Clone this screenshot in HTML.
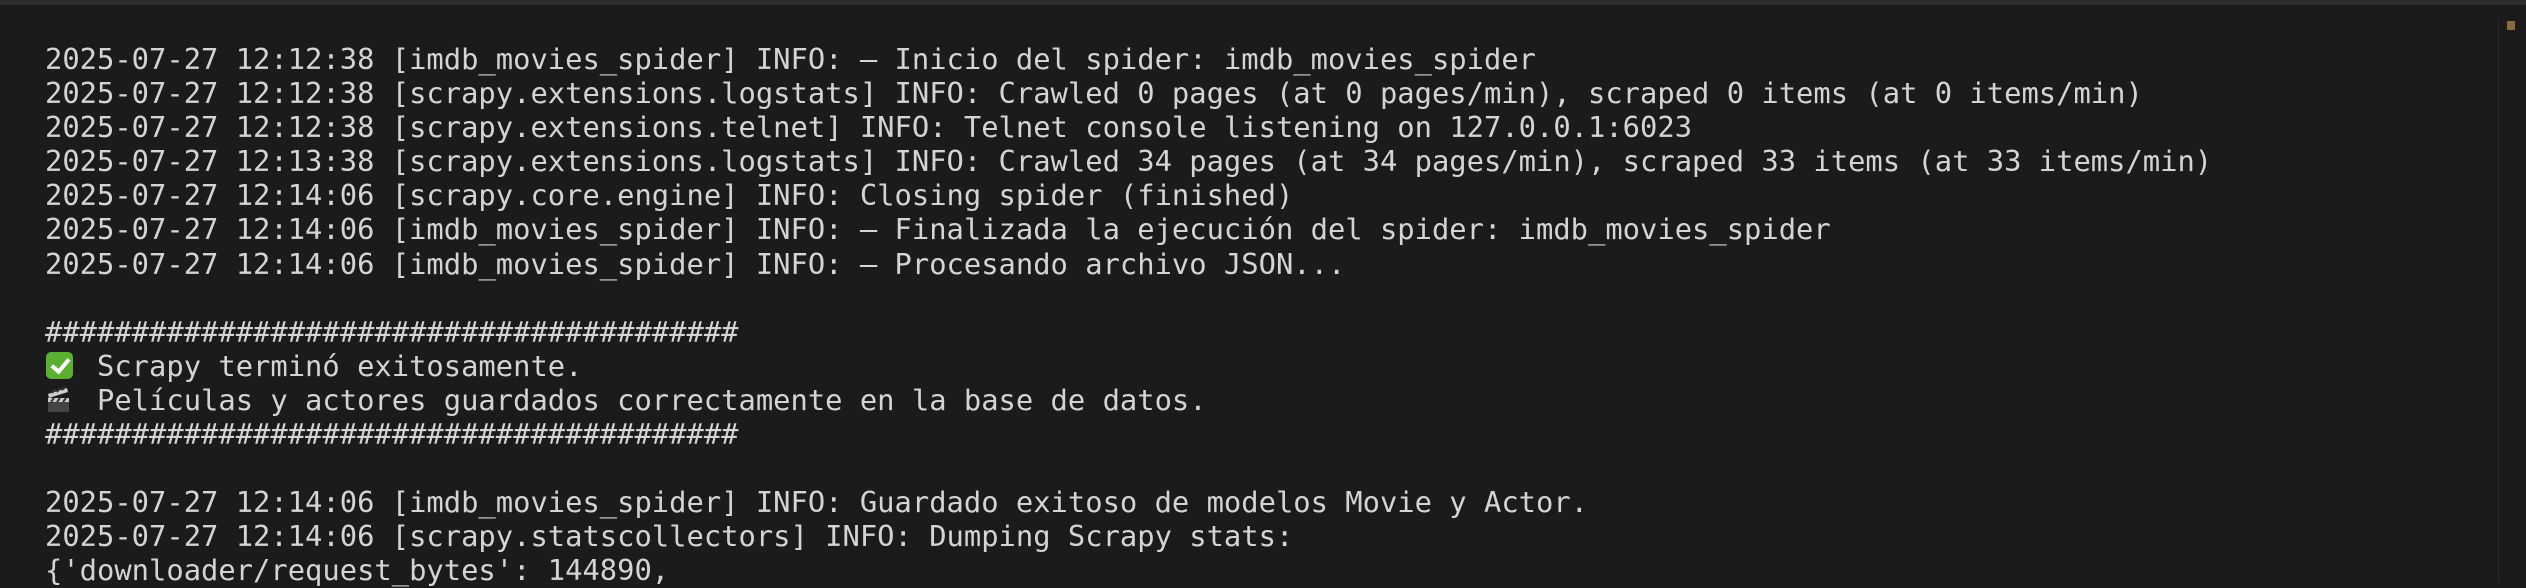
<!DOCTYPE html>
<html><head><meta charset="utf-8"><style>
html,body{margin:0;padding:0;}
body{width:2526px;height:582px;overflow:hidden;background:#1b1b1b;position:relative;}
.top{position:absolute;left:0;top:0;width:2526px;height:5px;background:#2d2d2d;}
.sb{position:absolute;left:2498px;top:20px;width:1px;height:562px;background:#2a2a2a;}
.mk{position:absolute;left:2507px;top:21px;width:8px;height:9px;background:#8a6a3a;}
pre{position:absolute;left:45px;top:42px;margin:0;font-family:"DejaVu Sans Mono","Liberation Mono",monospace;font-size:28.8px;line-height:34.1px;color:#d4d4d4;white-space:pre;}
.e{display:inline-block;width:2ch;height:1em;vertical-align:-4px;position:relative;}
.ck{position:absolute;left:1px;top:1px;width:27px;height:27px;border-radius:5px;background:#5bb032;}
.ck:after{content:"";position:absolute;left:9px;top:3px;width:7px;height:14px;border:solid #fff;border-width:0 4px 4px 0;transform:rotate(40deg);}
</style></head><body>
<div class="top"></div><div class="sb"></div><div class="mk"></div>
<pre>2025-07-27 12:12:38 [imdb_movies_spider] INFO: – Inicio del spider: imdb_movies_spider
2025-07-27 12:12:38 [scrapy.extensions.logstats] INFO: Crawled 0 pages (at 0 pages/min), scraped 0 items (at 0 items/min)
2025-07-27 12:12:38 [scrapy.extensions.telnet] INFO: Telnet console listening on 127.0.0.1:6023
2025-07-27 12:13:38 [scrapy.extensions.logstats] INFO: Crawled 34 pages (at 34 pages/min), scraped 33 items (at 33 items/min)
2025-07-27 12:14:06 [scrapy.core.engine] INFO: Closing spider (finished)
2025-07-27 12:14:06 [imdb_movies_spider] INFO: – Finalizada la ejecución del spider: imdb_movies_spider
2025-07-27 12:14:06 [imdb_movies_spider] INFO: – Procesando archivo JSON...

########################################
<span class="e"><span class="ck"></span></span> Scrapy terminó exitosamente.
<span class="e"><svg width="28" height="30" viewBox="0 0 28 30" style="position:absolute;left:0;top:0"><rect x="3" y="13" width="21" height="14" fill="#444"/><rect x="3" y="13" width="21" height="4" fill="#ccc"/><path d="M3 9 L22 3 L23 7 L4 13 Z" fill="#ccc"/><path d="M7 8 L10 4 M12 7 L15 3 M17 5 L20 2 M6 17 L9 13 M12 17 L15 13 M18 17 L21 13" stroke="#333" stroke-width="2"/></svg></span> Películas y actores guardados correctamente en la base de datos.
########################################

2025-07-27 12:14:06 [imdb_movies_spider] INFO: Guardado exitoso de modelos Movie y Actor.
2025-07-27 12:14:06 [scrapy.statscollectors] INFO: Dumping Scrapy stats:
{'downloader/request_bytes': 144890,</pre>
</body></html>
